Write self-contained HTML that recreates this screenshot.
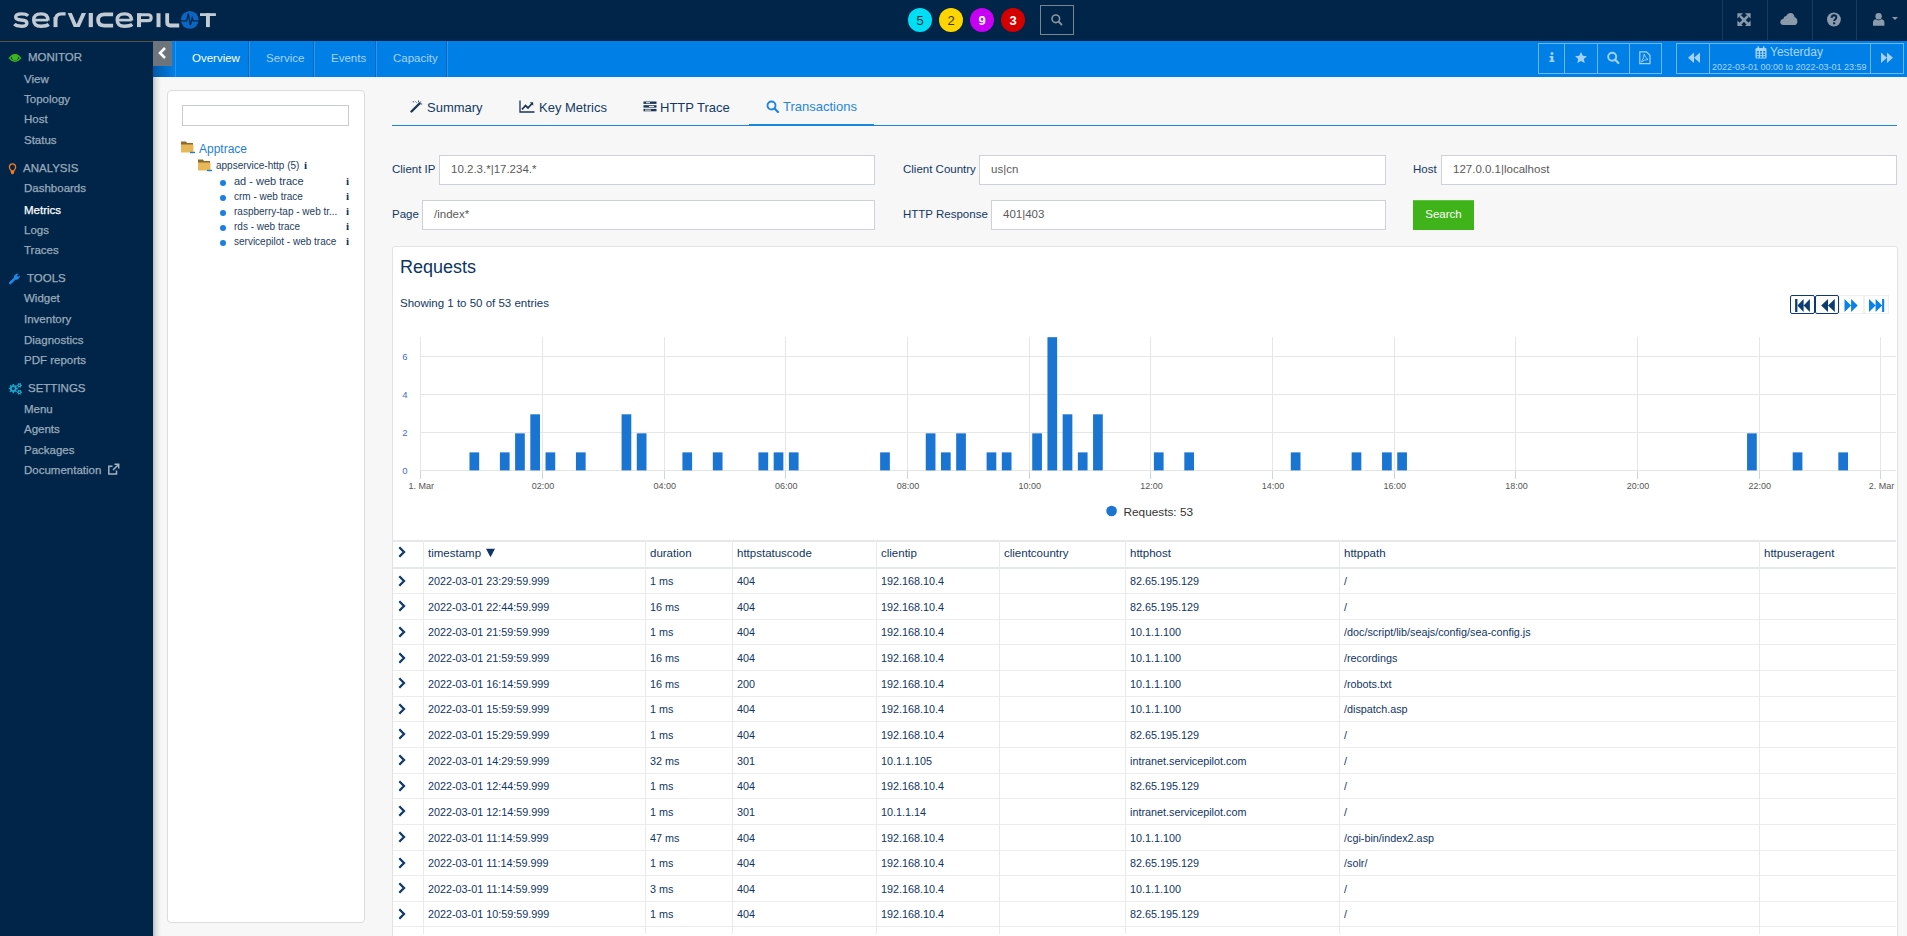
<!DOCTYPE html>
<html><head><meta charset="utf-8">
<style>
*{margin:0;padding:0;box-sizing:border-box}
html,body{width:1907px;height:936px;overflow:hidden;background:#f7f7f7;font-family:"Liberation Sans",sans-serif;font-size:11.5px;color:#17375e}
.a{position:absolute;white-space:nowrap;line-height:14px}
#hdr{position:absolute;left:0;top:0;width:1907px;height:41px;background:#002548}
#side{position:absolute;left:0;top:41px;width:153px;height:895px;background:#002548;border-top:1px solid #5a5040}
#nav{position:absolute;left:153px;top:41px;width:1754px;height:36px;background:#0080e6}
#content{position:absolute;left:153px;top:77px;width:1754px;height:859px;background:#f7f7f7}
.sh{color:#9aabbc;-webkit-text-stroke:0.25px #9aabbc}
.si{color:#9aabbc;left:24px;-webkit-text-stroke:0.25px #9aabbc}
.badge{position:absolute;top:8px;width:24px;height:24px;border-radius:12px;text-align:center;line-height:25px;font-size:13px}
.hsep{position:absolute;top:0;width:1px;height:40px;background:#1c3a59}
.ntab{position:absolute;top:40px;height:36px;line-height:36px;color:#a9d3f7;font-size:11.5px}
.nsepd{position:absolute;top:41px;width:1px;height:36px;background:#0068bc}
.nsepl{position:absolute;top:41px;width:1px;height:36px;background:#2a94ea}
.nbtn{position:absolute;top:43px;height:31px;border:1px solid #6cb6f2}
.tdot{position:absolute;left:220px;width:6px;height:6px;border-radius:3px;background:#1a7fe0}
.tl{left:234px;margin-top:1px;font-size:10px;color:#23405f}
.ti{left:346px;font-size:11px;font-weight:bold;font-family:"Liberation Serif",serif;color:#0d2f5a}
.tab{position:absolute;top:100px;font-size:13px;line-height:15px;color:#123a66;white-space:nowrap}
.lbl{color:#123866}
.inp{position:absolute;height:30px;border:1px solid #cdd2d8;background:#fff;padding-left:11px;line-height:26px;color:#5a5a5a;font-size:11.5px;white-space:nowrap}
.td{color:#0f3566;font-size:11.5px}
.tb{font-size:10.8px}
</style></head><body>
<div id="hdr"></div>
<div id="side"></div>
<div id="nav"></div>
<div id="content"></div>

<!-- logo -->
<svg class="a" style="left:0;top:0" width="230" height="41" viewBox="0 0 230 41">
<g fill="none" stroke="#c2cad3" stroke-width="3.4">
<path d="M28,15.8 Q26.3,13.9 21.2,13.9 Q15.7,13.9 15.7,17.1 Q15.7,19.8 21,20 Q26.9,20.2 26.9,23.2 Q26.9,26.2 21.3,26.2 Q16.2,26.2 14.3,24.2"/>
<path d="M48.1,20.6 Q48.1,13.9 41,13.9 Q33.7,13.9 33.7,20 Q33.7,26.2 41,26.2 Q46.6,26.2 48.8,24.4"/>
<path d="M131.6,20.6 Q131.6,13.9 124.5,13.9 Q117.2,13.9 117.2,20 Q117.2,26.2 124.5,26.2 Q130.1,26.2 132.3,24.4"/>
<path d="M55.5,20.5 Q55.5,13.9 61.5,13.9 H65.6"/>
<path d="M113.1,14.4 H104.5 Q98.1,14.4 98.1,20.05 Q98.1,25.7 104.5,25.7 H113.1" stroke-width="3.8"/>
<path d="M139,14.75 H148 Q151.2,14.75 151.2,17.7 Q151.2,20.65 148,20.65 H139" stroke-width="3.1"/>
<path d="M167.2,13.2 V22.6 Q167.2,25.5 170.2,25.5 H179.2" stroke-width="3.8"/>
</g>
<g fill="#c2cad3">
<rect x="33.7" y="18.75" width="14.4" height="2.7"/>
<rect x="117.2" y="18.75" width="14.4" height="2.7"/>
<rect x="53.5" y="17" width="4" height="10.1"/>
<polygon points="67.7,13 71.8,13 76.7,24.3 81.7,13 86,13 79.7,27.1 73.7,27.1"/>
<rect x="88.7" y="13" width="4.2" height="14.1"/>
<rect x="137" y="13.2" width="4" height="13.9"/>
<rect x="156.5" y="13.2" width="4" height="13.9"/>
<rect x="200" y="13.2" width="15.9" height="2.8"/>
<rect x="206" y="13.2" width="3.9" height="13.9"/>
</g>
<circle cx="189.8" cy="19.85" r="8.95" fill="#0a66c2"/>
<polyline points="180.8,20.8 186.7,20.8 188.3,13.6 190.4,25 192.2,18 193.2,20.8 198.7,20.8" fill="none" stroke="#002548" stroke-width="1.3" stroke-linejoin="miter"/>
</svg>

<!-- badges -->
<div class="badge" style="left:908px;background:#00def5;color:#333">5</div>
<div class="badge" style="left:939px;background:#ffd500;color:#333">2</div>
<div class="badge" style="left:970px;background:#c700f3;color:#fff;font-weight:bold">9</div>
<div class="badge" style="left:1001px;background:#d40000;color:#fff;font-weight:bold">3</div>
<div class="a" style="left:1040px;top:5px;width:34px;height:30px;border:1px solid #7a8590"></div>
<svg class="a" style="left:1050px;top:13px" width="14" height="14" viewBox="0 0 14 14"><circle cx="5.8" cy="5.8" r="3.8" fill="none" stroke="#8a949e" stroke-width="1.6"/><path d="M8.6,8.6 L11.5,11.5" stroke="#8a949e" stroke-width="1.8" stroke-linecap="round"/></svg>

<!-- right header -->
<div class="hsep" style="left:1722px"></div>
<div class="hsep" style="left:1767px"></div>
<div class="hsep" style="left:1812px"></div>
<div class="hsep" style="left:1856px"></div>
<svg class="a" style="left:1736px;top:12px" width="16" height="16" viewBox="0 0 16 16" fill="#8c9bab">
<path d="M4.2,4.2 L11.8,11.8 M11.8,4.2 L4.2,11.8" stroke="#8c9bab" stroke-width="2.6"/>
<path d="M1.4,1.2 H7 L1.4,6.6 Z M14.6,1.2 V6.6 L9,1.2 Z M1.4,14 V8.6 L7,14 Z M14.6,14 H9 L14.6,8.6 Z"/>
</svg>
<svg class="a" style="left:1780px;top:12px" width="18" height="15" viewBox="0 0 18 15" fill="#8c9bab">
<path d="M3.6,13 Q0.3,13 0.3,10 Q0.3,7.3 3.3,6.9 Q3.6,4.4 6.3,4.1 Q7.5,1 10.6,1 Q14.2,1.2 14.6,5.3 Q17.4,6 17.4,9.4 Q17.3,13 13.8,13 Z"/>
</svg>
<svg class="a" style="left:1826px;top:12px" width="16" height="16" viewBox="0 0 16 16">
<circle cx="7.9" cy="7.5" r="6.9" fill="#8c9bab"/>
<path d="M5.6,5.8 Q5.8,3.3 8,3.3 Q10.3,3.4 10.3,5.5 Q10.2,6.9 8.9,7.6 Q8.2,8 8.2,9.1" fill="none" stroke="#002548" stroke-width="1.9"/>
<rect x="7.1" y="10.3" width="2.1" height="2" fill="#002548"/>
</svg>
<svg class="a" style="left:1870px;top:12px" width="32" height="16" viewBox="0 0 32 16" fill="#8c9bab">
<circle cx="8.6" cy="4.3" r="3.2"/>
<path d="M3,13.8 V10.8 Q3,7.6 6,7.3 Q8.6,9 11.2,7.3 Q14.4,7.6 14.4,10.8 V13.8 Z"/>
<path d="M22,5 H28 L25,8 Z"/>
</svg>

<!-- nav -->
<div class="a" style="left:153px;top:41px;width:19px;height:25px;background:#6d747c"></div>
<svg class="a" style="left:156px;top:46px" width="13" height="14" viewBox="0 0 13 14"><path d="M9,2 L4,7 L9,12" fill="none" stroke="#fff" stroke-width="2.6"/></svg>
<div class="nsepl" style="left:175px"></div>
<div class="nsepd" style="left:248px"></div><div class="nsepl" style="left:249px"></div>
<div class="nsepd" style="left:313px"></div><div class="nsepl" style="left:314px"></div>
<div class="nsepd" style="left:375px"></div><div class="nsepl" style="left:376px"></div>
<div class="nsepd" style="left:446px"></div><div class="nsepl" style="left:447px"></div>
<div class="ntab" style="left:192px;color:#fff">Overview</div>
<div class="ntab" style="left:266px">Service</div>
<div class="ntab" style="left:331px">Events</div>
<div class="ntab" style="left:393px">Capacity</div>

<div class="nbtn" style="left:1538px;width:124px"></div>
<div class="nsepl" style="left:1564px;top:43px;height:31px;background:#6cb6f2"></div>
<div class="nsepl" style="left:1597px;top:43px;height:31px;background:#6cb6f2"></div>
<div class="nsepl" style="left:1629px;top:43px;height:31px;background:#6cb6f2"></div>
<div class="nbtn" style="left:1676px;width:228px"></div>
<div class="nsepl" style="left:1709px;top:43px;height:31px;background:#6cb6f2"></div>
<div class="nsepl" style="left:1870px;top:43px;height:31px;background:#6cb6f2"></div>

<!-- nav button icons -->
<svg class="a" style="left:1548px;top:52px" width="8" height="11" viewBox="0 0 8 11" fill="#a3d1f7">
<circle cx="4" cy="1.5" r="1.5"/><path d="M1.5,4 H5.3 V8.6 H6.5 V10 H1.5 V8.6 H2.7 V5.4 H1.5 Z"/>
</svg>
<svg class="a" style="left:1574px;top:51px" width="14" height="13" viewBox="0 0 14 13" fill="#a3d1f7">
<path d="M7,1 L8.8,4.8 L12.9,5.2 L9.8,8 L10.7,12.1 L7,9.9 L3.3,12.1 L4.2,8 L1.1,5.2 L5.2,4.8 Z"/>
</svg>
<svg class="a" style="left:1606px;top:51px" width="15" height="14" viewBox="0 0 15 14">
<circle cx="6.2" cy="5.8" r="4" fill="none" stroke="#a3d1f7" stroke-width="1.9"/><path d="M9,8.6 L12.4,12" stroke="#a3d1f7" stroke-width="2.2" stroke-linecap="round"/>
</svg>
<svg class="a" style="left:1638px;top:51px" width="14" height="14" viewBox="0 0 14 14">
<path d="M1.8,0.8 H8.5 L12,4.3 V12.7 H1.8 Z" fill="none" stroke="#a3d1f7" stroke-width="1.2"/>
<path d="M3.5,11 Q5.5,7.5 6.2,3 Q6.8,6.5 10,8.5 Q6,8.5 3.5,11" fill="none" stroke="#a3d1f7" stroke-width="0.9"/>
</svg>
<svg class="a" style="left:1687px;top:52px" width="14" height="12" viewBox="0 0 14 12" fill="#a3d1f7">
<path d="M7,0.5 V11 L1,5.75 Z M13,0.5 V11 L7,5.75 Z"/>
</svg>
<svg class="a" style="left:1880px;top:52px" width="14" height="12" viewBox="0 0 14 12" fill="#a3d1f7">
<path d="M1,0.5 V11 L7,5.75 Z M7,0.5 V11 L13,5.75 Z"/>
</svg>
<svg class="a" style="left:1755px;top:46px" width="12" height="13" viewBox="0 0 12 13" fill="#a9d4f7">
<rect x="0.5" y="2" width="11" height="10.5" rx="1"/>
<rect x="2.5" y="0.3" width="1.6" height="3"/><rect x="7.9" y="0.3" width="1.6" height="3"/>
<g fill="#0080e6"><rect x="1.8" y="5" width="2" height="1.6"/><rect x="5" y="5" width="2" height="1.6"/><rect x="8.2" y="5" width="2" height="1.6"/>
<rect x="1.8" y="7.6" width="2" height="1.6"/><rect x="5" y="7.6" width="2" height="1.6"/><rect x="8.2" y="7.6" width="2" height="1.6"/>
<rect x="1.8" y="10.2" width="2" height="1.4"/><rect x="5" y="10.2" width="2" height="1.4"/><rect x="8.2" y="10.2" width="2" height="1.4"/></g>
</svg>
<div class="a" style="left:1770px;top:45px;font-size:12px;color:#a9d4f7">Yesterday</div>
<div class="a" style="left:1712px;top:60px;font-size:9px;color:#a9d4f7">2022-03-01 00:00 to 2022-03-01 23:59</div>

<!-- sidebar -->
<svg class="a" style="left:0px;top:48px" width="26" height="20" viewBox="0 48 26 20">
<path d="M9.4,58 Q15,51.5 20.6,58 Q15,64.5 9.4,58 Z" fill="none" stroke="#3cb61c" stroke-width="1.4"/>
<circle cx="15" cy="57.2" r="3.1" fill="#3cb61c"/>
</svg>
<div class="a sh" style="left:28px;top:50px">MONITOR</div>
<div class="a si" style="top:72px">View</div>
<div class="a si" style="top:92px">Topology</div>
<div class="a si" style="top:112px">Host</div>
<div class="a si" style="top:133px">Status</div>
<svg class="a" style="left:0px;top:158px" width="22" height="20" viewBox="0 158 22 20">
<path d="M12.5,163.9 Q15.6,164 15.6,167.2 Q15.6,169.3 13.8,170.6 V171.2 H11.2 V170.6 Q9.4,169.3 9.4,167.2 Q9.4,164 12.5,163.9 Z" fill="none" stroke="#f0761c" stroke-width="1.3"/>
<path d="M10.9,170.4 H14.1 V173 Q13.5,174.2 12.5,174.2 Q11.5,174.2 10.9,173 Z" fill="#f57a1c"/>
</svg>
<div class="a sh" style="left:23px;top:161px">ANALYSIS</div>
<div class="a si" style="top:181px">Dashboards</div>
<div class="a si" style="top:203px;color:#fff;-webkit-text-stroke:0.25px #fff">Metrics</div>
<div class="a si" style="top:223px">Logs</div>
<div class="a si" style="top:243px">Traces</div>
<svg class="a" style="left:0px;top:268px" width="30" height="20" viewBox="0 268 30 20">
<path d="M10.2,283.2 L15.2,278.2" stroke="#1e88e5" stroke-width="2.6" stroke-linecap="round"/>
<path d="M14.2,279.3 Q13.2,275.8 15.6,274.2 Q17.2,273.3 18.7,273.7 L17,275.6 L18.1,277 L19.9,275.2 Q20.3,277.5 18.6,278.8 Q16.8,280.3 14.2,279.3 Z" fill="#1e88e5"/>
</svg>
<div class="a sh" style="left:27px;top:271px">TOOLS</div>
<div class="a si" style="top:291px">Widget</div>
<div class="a si" style="top:312px">Inventory</div>
<div class="a si" style="top:333px">Diagnostics</div>
<div class="a si" style="top:353px">PDF reports</div>
<svg class="a" style="left:0px;top:378px" width="30" height="20" viewBox="0 378 30 20">
<path d="M17.83,387.78 L17.83,389.42 L16.72,389.34 L16.24,390.50 L17.08,391.22 L15.92,392.38 L15.20,391.54 L14.04,392.02 L14.12,393.13 L12.48,393.13 L12.56,392.02 L11.40,391.54 L10.68,392.38 L9.52,391.22 L10.36,390.50 L9.88,389.34 L8.77,389.42 L8.77,387.78 L9.88,387.86 L10.36,386.70 L9.52,385.98 L10.68,384.82 L11.40,385.66 L12.56,385.18 L12.48,384.07 L14.12,384.07 L14.04,385.18 L15.20,385.66 L15.92,384.82 L17.08,385.98 L16.24,386.70 L16.72,387.86 Z M13.3,387.1 A1.5,1.5 0 1,0 13.3,390.1 A1.5,1.5 0 1,0 13.3,387.1 Z" fill="#1aa3c8" fill-rule="evenodd"/>
<path d="M21.96,384.93 L21.96,385.87 L21.19,386.04 L20.85,386.63 L21.08,387.38 L20.28,387.85 L19.74,387.27 L19.06,387.27 L18.52,387.85 L17.72,387.38 L17.95,386.63 L17.61,386.04 L16.84,385.87 L16.84,384.93 L17.61,384.76 L17.95,384.17 L17.72,383.42 L18.52,382.95 L19.06,383.53 L19.74,383.53 L20.28,382.95 L21.08,383.42 L20.85,384.17 L21.19,384.76 Z M19.4,384.7 A0.7,0.7 0 1,0 19.4,386.1 A0.7,0.7 0 1,0 19.4,384.7 Z" fill="#1aa3c8" fill-rule="evenodd"/>
<path d="M21.96,391.73 L21.96,392.67 L21.19,392.84 L20.85,393.43 L21.08,394.18 L20.28,394.65 L19.74,394.07 L19.06,394.07 L18.52,394.65 L17.72,394.18 L17.95,393.43 L17.61,392.84 L16.84,392.67 L16.84,391.73 L17.61,391.56 L17.95,390.97 L17.72,390.22 L18.52,389.75 L19.06,390.33 L19.74,390.33 L20.28,389.75 L21.08,390.22 L20.85,390.97 L21.19,391.56 Z M19.4,391.5 A0.7,0.7 0 1,0 19.4,392.9 A0.7,0.7 0 1,0 19.4,391.5 Z" fill="#1aa3c8" fill-rule="evenodd"/>
</svg>
<div class="a sh" style="left:28px;top:381px">SETTINGS</div>
<div class="a si" style="top:402px">Menu</div>
<div class="a si" style="top:422px">Agents</div>
<div class="a si" style="top:443px">Packages</div>
<div class="a si" style="top:463px">Documentation</div>
<svg class="a" style="left:107px;top:463px" width="13" height="13" viewBox="0 0 13 13" fill="none" stroke="#a3b2c1" stroke-width="1.5">
<path d="M9.5,7.5 V11 H1.8 V3.3 H5.5"/><path d="M6,7 L11.5,1.5 M7.5,1.3 H11.7 V5.5"/>
</svg>

<!-- content shadow -->
<div class="a" style="left:153px;top:77px;width:8px;height:859px;background:linear-gradient(to right,#bdbdbd,#dedede 35%,#f7f7f7)"></div>
<div class="a" style="left:153px;top:66px;width:22px;height:11px;background:linear-gradient(to right,#0058a8,#0080e6)"></div>

<!-- tree panel -->
<div class="a" style="left:167px;top:90px;width:198px;height:833px;background:#fff;border:1px solid #dcdcdc;border-radius:4px"></div>
<div class="a" style="left:182px;top:105px;width:167px;height:21px;border:1px solid #c6ccd3;background:#fff"></div>
<svg class="a" style="left:180px;top:140px" width="16" height="14" viewBox="0 0 16 14">
<path d="M1,1.5 H6 L7,3 H13 V11.5 H1 Z" fill="#8b6a2e"/>
<path d="M1,4.5 H13.5 V12.5 H1 Z" fill="#e8b858"/>
<rect x="10" y="11.8" width="5" height="1.4" fill="#1c7fd8"/>
</svg>
<div class="a" style="left:199px;top:142px;font-size:12px;color:#1f7fd6">Apptrace</div>
<svg class="a" style="left:197px;top:158px" width="16" height="14" viewBox="0 0 16 14">
<path d="M1,1.5 H6 L7,3 H13 V11.5 H1 Z" fill="#8b6a2e"/>
<path d="M1,4.5 H13.5 V12.5 H1 Z" fill="#e8b858"/>
<rect x="10" y="11.8" width="5" height="1.4" fill="#1c7fd8"/>
</svg>
<div class="a" style="left:216px;top:159px;font-size:10px;color:#23405f">appservice-http (5)</div>
<div class="a" style="left:304px;top:158px;font-size:11px;font-weight:bold;font-family:'Liberation Serif',serif;color:#0d2f5a">i</div>
<div class="tdot" style="top:180px"></div><div class="a tl" style="top:173px;font-size:11px">ad - web trace</div><div class="a ti" style="top:174px">i</div>
<div class="tdot" style="top:195px"></div><div class="a tl" style="top:189px">crm - web trace</div><div class="a ti" style="top:189px">i</div>
<div class="tdot" style="top:210px"></div><div class="a tl" style="top:204px">raspberry-tap - web tr...</div><div class="a ti" style="top:204px">i</div>
<div class="tdot" style="top:225px"></div><div class="a tl" style="top:219px">rds - web trace</div><div class="a ti" style="top:219px">i</div>
<div class="tdot" style="top:240px"></div><div class="a tl" style="top:234px">servicepilot - web trace</div><div class="a ti" style="top:234px">i</div>

<!-- tabs -->
<div class="a" style="left:392px;top:125px;width:1505px;height:1px;background:#1a86e0"></div>
<div class="a" style="left:749px;top:124px;width:125px;height:2px;background:#1a86e0"></div>
<svg class="a" style="left:410px;top:100px" width="13" height="13" viewBox="0 0 13 13">
<path d="M1.5,11.5 L9.5,3.5" stroke="#1b3556" stroke-width="2.4" stroke-linecap="round"/>
<g stroke="#1b3556" stroke-width="0.9"><path d="M8.5,0.5 V2.2 M10.8,1.5 L10,2.8 M12.2,4 H10.6 M5.5,1.5 L6.5,2.6 M3.3,1.2 V2.4"/></g>
</svg>
<div class="tab" style="left:427px">Summary</div>
<svg class="a" style="left:519px;top:100px" width="16" height="13" viewBox="0 0 16 13">
<path d="M1,0.5 V12 H15.5" fill="none" stroke="#1b3556" stroke-width="1.3"/>
<path d="M3,9.5 L6.5,5.5 L9,8 L13,3.5" fill="none" stroke="#1b3556" stroke-width="1.8"/>
<path d="M10.8,2.3 H14.2 V5.7 Z" fill="#1b3556"/>
</svg>
<div class="tab" style="left:539px">Key Metrics</div>
<svg class="a" style="left:643px;top:101px" width="14" height="11" viewBox="0 0 14 11" fill="#1b3556">
<rect x="0.5" y="0.5" width="13" height="2.4"/><rect x="0.5" y="4.2" width="13" height="2.4"/><rect x="0.5" y="7.9" width="13" height="2.4"/>
<g fill="#f7f7f7"><rect x="3" y="1.2" width="4" height="1"/><rect x="6" y="4.9" width="5" height="1"/><rect x="2" y="8.6" width="6" height="1"/></g>
</svg>
<div class="tab" style="left:660px">HTTP Trace</div>
<svg class="a" style="left:766px;top:100px" width="14" height="13" viewBox="0 0 14 13">
<circle cx="5.5" cy="5.5" r="4" fill="none" stroke="#1f86dc" stroke-width="1.9"/><path d="M8.5,8.5 L12,12" stroke="#1f86dc" stroke-width="2.2" stroke-linecap="round"/>
</svg>
<div class="tab" style="left:783px;top:99px;color:#1f86dc">Transactions</div>

<!-- filter form -->
<div class="a lbl" style="left:392px;top:162px">Client IP</div>
<div class="inp" style="left:439px;top:155px;width:436px">10.2.3.*|17.234.*</div>
<div class="a lbl" style="left:903px;top:162px">Client Country</div>
<div class="inp" style="left:979px;top:155px;width:407px">us|cn</div>
<div class="a lbl" style="left:1413px;top:162px">Host</div>
<div class="inp" style="left:1441px;top:155px;width:456px">127.0.0.1|localhost</div>
<div class="a lbl" style="left:392px;top:207px">Page</div>
<div class="inp" style="left:422px;top:200px;width:453px">/index*</div>
<div class="a lbl" style="left:903px;top:207px">HTTP Response</div>
<div class="inp" style="left:991px;top:200px;width:395px">401|403</div>
<div class="a" style="left:1413px;top:200px;width:61px;height:30px;background:#40b31a;color:#fff;text-align:center;line-height:29px;font-size:11.5px;box-shadow:inset 0 2px 0 -1px rgba(255,255,255,0.18)">Search</div>

<!-- requests panel -->
<div class="a" style="left:392px;top:246px;width:1506px;height:700px;background:#fff;border:1px solid #e2e2e2;border-radius:3px"></div>
<div class="a" style="left:400px;top:256px;font-size:18px;line-height:22px;color:#0a3566">Requests</div>
<div class="a" style="left:400px;top:296px;color:#113868">Showing 1 to 50 of 53 entries</div>

<!-- pagination -->
<div class="a" style="left:1790px;top:295px;width:25px;height:19px;border:1px solid #0d3a6e;border-radius:2px;background:#fff"></div>
<div class="a" style="left:1815px;top:295px;width:24px;height:19px;border:1px solid #0d3a6e;border-radius:2px;background:#fff"></div>
<div class="a" style="left:1839px;top:295px;width:25px;height:19px;border:1px solid #f0f0f0;background:#fff"></div>
<div class="a" style="left:1864px;top:295px;width:25px;height:19px;border:1px solid #f0f0f0;background:#fff"></div>
<svg class="a" style="left:1790px;top:295px" width="100" height="19" viewBox="0 0 100 19">
<g fill="#0b3d73"><rect x="5.1" y="4" width="2.3" height="13"/><path d="M7.4,10.5 L13.6,4 V17 Z M13.6,10.5 L19.9,4 V17 Z"/>
<path d="M31.2,10.5 L38,4 V17 Z M38,10.5 L44.8,4 V17 Z"/></g>
<g fill="#0a80ea"><path d="M54.5,4 L61.1,10.5 L54.5,17 Z M61.1,4 L67.7,10.5 L61.1,17 Z"/>
<path d="M79,4 L85.6,10.5 L79,17 Z M85.6,4 L92.1,10.5 L85.6,17 Z"/><rect x="92.1" y="4" width="2.1" height="13"/></g>
</svg>
<svg class="a" style="left:392px;top:330px" width="1506" height="200" viewBox="392 330 1506 200">
<path d="M420.3,432.5 H1896" stroke="#e6e6e6" stroke-width="1"/>
<path d="M420.3,394.5 H1896" stroke="#e6e6e6" stroke-width="1"/>
<path d="M420.3,356.5 H1896" stroke="#e6e6e6" stroke-width="1"/>
<path d="M420.5,337 V470" stroke="#e6e6e6" stroke-width="1"/>
<path d="M420.5,470 V479" stroke="#ccd6eb" stroke-width="1"/>
<path d="M542.5,337 V470" stroke="#e6e6e6" stroke-width="1"/>
<path d="M542.5,470 V479" stroke="#ccd6eb" stroke-width="1"/>
<path d="M664.5,337 V470" stroke="#e6e6e6" stroke-width="1"/>
<path d="M664.5,470 V479" stroke="#ccd6eb" stroke-width="1"/>
<path d="M785.5,337 V470" stroke="#e6e6e6" stroke-width="1"/>
<path d="M785.5,470 V479" stroke="#ccd6eb" stroke-width="1"/>
<path d="M907.5,337 V470" stroke="#e6e6e6" stroke-width="1"/>
<path d="M907.5,470 V479" stroke="#ccd6eb" stroke-width="1"/>
<path d="M1029.5,337 V470" stroke="#e6e6e6" stroke-width="1"/>
<path d="M1029.5,470 V479" stroke="#ccd6eb" stroke-width="1"/>
<path d="M1150.5,337 V470" stroke="#e6e6e6" stroke-width="1"/>
<path d="M1150.5,470 V479" stroke="#ccd6eb" stroke-width="1"/>
<path d="M1272.5,337 V470" stroke="#e6e6e6" stroke-width="1"/>
<path d="M1272.5,470 V479" stroke="#ccd6eb" stroke-width="1"/>
<path d="M1394.5,337 V470" stroke="#e6e6e6" stroke-width="1"/>
<path d="M1394.5,470 V479" stroke="#ccd6eb" stroke-width="1"/>
<path d="M1515.5,337 V470" stroke="#e6e6e6" stroke-width="1"/>
<path d="M1515.5,470 V479" stroke="#ccd6eb" stroke-width="1"/>
<path d="M1637.5,337 V470" stroke="#e6e6e6" stroke-width="1"/>
<path d="M1637.5,470 V479" stroke="#ccd6eb" stroke-width="1"/>
<path d="M1759.5,337 V470" stroke="#e6e6e6" stroke-width="1"/>
<path d="M1759.5,470 V479" stroke="#ccd6eb" stroke-width="1"/>
<path d="M1880.5,337 V470" stroke="#e6e6e6" stroke-width="1"/>
<path d="M1880.5,470 V479" stroke="#ccd6eb" stroke-width="1"/>
<path d="M420.3,470.5 H1896" stroke="#e6e6e6" stroke-width="1"/>
<rect x="469.48" y="452.37" width="9.7" height="18.03" fill="#1a74d2"/>
<rect x="499.90" y="452.37" width="9.7" height="18.03" fill="#1a74d2"/>
<rect x="515.11" y="433.34" width="9.7" height="37.06" fill="#1a74d2"/>
<rect x="530.32" y="414.31" width="9.7" height="56.09" fill="#1a74d2"/>
<rect x="545.53" y="452.37" width="9.7" height="18.03" fill="#1a74d2"/>
<rect x="575.95" y="452.37" width="9.7" height="18.03" fill="#1a74d2"/>
<rect x="621.58" y="414.31" width="9.7" height="56.09" fill="#1a74d2"/>
<rect x="636.79" y="433.34" width="9.7" height="37.06" fill="#1a74d2"/>
<rect x="682.41" y="452.37" width="9.7" height="18.03" fill="#1a74d2"/>
<rect x="712.83" y="452.37" width="9.7" height="18.03" fill="#1a74d2"/>
<rect x="758.46" y="452.37" width="9.7" height="18.03" fill="#1a74d2"/>
<rect x="773.67" y="452.37" width="9.7" height="18.03" fill="#1a74d2"/>
<rect x="788.88" y="452.37" width="9.7" height="18.03" fill="#1a74d2"/>
<rect x="880.14" y="452.37" width="9.7" height="18.03" fill="#1a74d2"/>
<rect x="925.76" y="433.34" width="9.7" height="37.06" fill="#1a74d2"/>
<rect x="940.97" y="452.37" width="9.7" height="18.03" fill="#1a74d2"/>
<rect x="956.18" y="433.34" width="9.7" height="37.06" fill="#1a74d2"/>
<rect x="986.60" y="452.37" width="9.7" height="18.03" fill="#1a74d2"/>
<rect x="1001.81" y="452.37" width="9.7" height="18.03" fill="#1a74d2"/>
<rect x="1032.23" y="433.34" width="9.7" height="37.06" fill="#1a74d2"/>
<rect x="1047.44" y="337.19" width="9.7" height="133.21" fill="#1a74d2"/>
<rect x="1062.65" y="414.31" width="9.7" height="56.09" fill="#1a74d2"/>
<rect x="1077.86" y="452.37" width="9.7" height="18.03" fill="#1a74d2"/>
<rect x="1093.07" y="414.31" width="9.7" height="56.09" fill="#1a74d2"/>
<rect x="1153.90" y="452.37" width="9.7" height="18.03" fill="#1a74d2"/>
<rect x="1184.32" y="452.37" width="9.7" height="18.03" fill="#1a74d2"/>
<rect x="1290.79" y="452.37" width="9.7" height="18.03" fill="#1a74d2"/>
<rect x="1351.63" y="452.37" width="9.7" height="18.03" fill="#1a74d2"/>
<rect x="1382.05" y="452.37" width="9.7" height="18.03" fill="#1a74d2"/>
<rect x="1397.25" y="452.37" width="9.7" height="18.03" fill="#1a74d2"/>
<rect x="1747.07" y="433.34" width="9.7" height="37.06" fill="#1a74d2"/>
<rect x="1792.70" y="452.37" width="9.7" height="18.03" fill="#1a74d2"/>
<rect x="1838.33" y="452.37" width="9.7" height="18.03" fill="#1a74d2"/>
<text x="407.5" y="473.7" text-anchor="end" font-size="9.5" fill="#3f6ec8" font-family="Liberation Sans">0</text>
<text x="407.5" y="435.6" text-anchor="end" font-size="9.5" fill="#3f6ec8" font-family="Liberation Sans">2</text>
<text x="407.5" y="397.6" text-anchor="end" font-size="9.5" fill="#3f6ec8" font-family="Liberation Sans">4</text>
<text x="407.5" y="359.5" text-anchor="end" font-size="9.5" fill="#3f6ec8" font-family="Liberation Sans">6</text>
<text x="421.3" y="489" text-anchor="middle" font-size="9" fill="#555" font-family="Liberation Sans">1. Mar</text>
<text x="543.0" y="489" text-anchor="middle" font-size="9" fill="#555" font-family="Liberation Sans">02:00</text>
<text x="664.7" y="489" text-anchor="middle" font-size="9" fill="#555" font-family="Liberation Sans">04:00</text>
<text x="786.3" y="489" text-anchor="middle" font-size="9" fill="#555" font-family="Liberation Sans">06:00</text>
<text x="908.0" y="489" text-anchor="middle" font-size="9" fill="#555" font-family="Liberation Sans">08:00</text>
<text x="1029.7" y="489" text-anchor="middle" font-size="9" fill="#555" font-family="Liberation Sans">10:00</text>
<text x="1151.4" y="489" text-anchor="middle" font-size="9" fill="#555" font-family="Liberation Sans">12:00</text>
<text x="1273.0" y="489" text-anchor="middle" font-size="9" fill="#555" font-family="Liberation Sans">14:00</text>
<text x="1394.7" y="489" text-anchor="middle" font-size="9" fill="#555" font-family="Liberation Sans">16:00</text>
<text x="1516.4" y="489" text-anchor="middle" font-size="9" fill="#555" font-family="Liberation Sans">18:00</text>
<text x="1638.0" y="489" text-anchor="middle" font-size="9" fill="#555" font-family="Liberation Sans">20:00</text>
<text x="1759.7" y="489" text-anchor="middle" font-size="9" fill="#555" font-family="Liberation Sans">22:00</text>
<text x="1881.4" y="489" text-anchor="middle" font-size="9" fill="#555" font-family="Liberation Sans">2. Mar</text>
<circle cx="1111.6" cy="511" r="5.3" fill="#1a74d2"/>
<text x="1123.5" y="515.5" font-size="11.8" fill="#333" font-family="Liberation Sans">Requests: 53</text>
</svg>

<div class="a" style="left:393px;top:540px;width:1503px;height:2px;background:#e4e7eb"></div>
<div class="a" style="left:393px;top:567px;width:1503px;height:2px;background:#e4e7eb"></div>
<div class="a" style="left:393px;top:593px;width:1503px;height:1px;background:#ececec"></div>
<div class="a" style="left:393px;top:619px;width:1503px;height:1px;background:#ececec"></div>
<div class="a" style="left:393px;top:644px;width:1503px;height:1px;background:#ececec"></div>
<div class="a" style="left:393px;top:670px;width:1503px;height:1px;background:#ececec"></div>
<div class="a" style="left:393px;top:696px;width:1503px;height:1px;background:#ececec"></div>
<div class="a" style="left:393px;top:721px;width:1503px;height:1px;background:#ececec"></div>
<div class="a" style="left:393px;top:747px;width:1503px;height:1px;background:#ececec"></div>
<div class="a" style="left:393px;top:773px;width:1503px;height:1px;background:#ececec"></div>
<div class="a" style="left:393px;top:798px;width:1503px;height:1px;background:#ececec"></div>
<div class="a" style="left:393px;top:824px;width:1503px;height:1px;background:#ececec"></div>
<div class="a" style="left:393px;top:850px;width:1503px;height:1px;background:#ececec"></div>
<div class="a" style="left:393px;top:875px;width:1503px;height:1px;background:#ececec"></div>
<div class="a" style="left:393px;top:901px;width:1503px;height:1px;background:#ececec"></div>
<div class="a" style="left:393px;top:926px;width:1503px;height:1px;background:#ececec"></div>
<div class="a" style="left:393px;top:952px;width:1503px;height:1px;background:#ececec"></div>
<div class="a" style="left:393px;top:978px;width:1503px;height:1px;background:#ececec"></div>
<div class="a" style="left:423px;top:540px;width:1px;height:394px;background:#eaeaea"></div>
<div class="a" style="left:645px;top:540px;width:1px;height:394px;background:#eaeaea"></div>
<div class="a" style="left:732px;top:540px;width:1px;height:394px;background:#eaeaea"></div>
<div class="a" style="left:876px;top:540px;width:1px;height:394px;background:#eaeaea"></div>
<div class="a" style="left:999px;top:540px;width:1px;height:394px;background:#eaeaea"></div>
<div class="a" style="left:1125px;top:540px;width:1px;height:394px;background:#eaeaea"></div>
<div class="a" style="left:1339px;top:540px;width:1px;height:394px;background:#eaeaea"></div>
<div class="a" style="left:1759px;top:540px;width:1px;height:394px;background:#eaeaea"></div>
<svg class="a" style="left:397px;top:546px" width="10" height="12" viewBox="0 0 10 12"><path d="M2.3,1.3 L7,6 L2.3,10.7" fill="none" stroke="#0d3a6e" stroke-width="2.3"/></svg>
<div class="a td" style="left:428px;top:545.7px">timestamp</div>
<div class="a td" style="left:650px;top:545.7px">duration</div>
<div class="a td" style="left:737px;top:545.7px">httpstatuscode</div>
<div class="a td" style="left:881px;top:545.7px">clientip</div>
<div class="a td" style="left:1004px;top:545.7px">clientcountry</div>
<div class="a td" style="left:1130px;top:545.7px">httphost</div>
<div class="a td" style="left:1344px;top:545.7px">httppath</div>
<div class="a td" style="left:1764px;top:545.7px">httpuseragent</div>
<svg class="a" style="left:485px;top:548px" width="11" height="10" viewBox="0 0 11 10"><path d="M1,0.8 H10 L5.5,9.2 Z" fill="#0f3566"/></svg>
<svg class="a" style="left:397px;top:575px" width="10" height="12" viewBox="0 0 10 12"><path d="M2.3,1.3 L7,6 L2.3,10.7" fill="none" stroke="#0d3a6e" stroke-width="2.3"/></svg>
<div class="a td tb" style="left:428px;top:574.0px">2022-03-01 23:29:59.999</div>
<div class="a td tb" style="left:650px;top:574.0px">1 ms</div>
<div class="a td tb" style="left:737px;top:574.0px">404</div>
<div class="a td tb" style="left:881px;top:574.0px">192.168.10.4</div>
<div class="a td tb" style="left:1130px;top:574.0px">82.65.195.129</div>
<div class="a td tb" style="left:1344px;top:574.0px">/</div>
<svg class="a" style="left:397px;top:600px" width="10" height="12" viewBox="0 0 10 12"><path d="M2.3,1.3 L7,6 L2.3,10.7" fill="none" stroke="#0d3a6e" stroke-width="2.3"/></svg>
<div class="a td tb" style="left:428px;top:599.6px">2022-03-01 22:44:59.999</div>
<div class="a td tb" style="left:650px;top:599.6px">16 ms</div>
<div class="a td tb" style="left:737px;top:599.6px">404</div>
<div class="a td tb" style="left:881px;top:599.6px">192.168.10.4</div>
<div class="a td tb" style="left:1130px;top:599.6px">82.65.195.129</div>
<div class="a td tb" style="left:1344px;top:599.6px">/</div>
<svg class="a" style="left:397px;top:626px" width="10" height="12" viewBox="0 0 10 12"><path d="M2.3,1.3 L7,6 L2.3,10.7" fill="none" stroke="#0d3a6e" stroke-width="2.3"/></svg>
<div class="a td tb" style="left:428px;top:625.3px">2022-03-01 21:59:59.999</div>
<div class="a td tb" style="left:650px;top:625.3px">1 ms</div>
<div class="a td tb" style="left:737px;top:625.3px">404</div>
<div class="a td tb" style="left:881px;top:625.3px">192.168.10.4</div>
<div class="a td tb" style="left:1130px;top:625.3px">10.1.1.100</div>
<div class="a td tb" style="left:1344px;top:625.3px">/doc/script/lib/seajs/config/sea-config.js</div>
<svg class="a" style="left:397px;top:652px" width="10" height="12" viewBox="0 0 10 12"><path d="M2.3,1.3 L7,6 L2.3,10.7" fill="none" stroke="#0d3a6e" stroke-width="2.3"/></svg>
<div class="a td tb" style="left:428px;top:650.9px">2022-03-01 21:59:59.999</div>
<div class="a td tb" style="left:650px;top:650.9px">16 ms</div>
<div class="a td tb" style="left:737px;top:650.9px">404</div>
<div class="a td tb" style="left:881px;top:650.9px">192.168.10.4</div>
<div class="a td tb" style="left:1130px;top:650.9px">10.1.1.100</div>
<div class="a td tb" style="left:1344px;top:650.9px">/recordings</div>
<svg class="a" style="left:397px;top:677px" width="10" height="12" viewBox="0 0 10 12"><path d="M2.3,1.3 L7,6 L2.3,10.7" fill="none" stroke="#0d3a6e" stroke-width="2.3"/></svg>
<div class="a td tb" style="left:428px;top:676.6px">2022-03-01 16:14:59.999</div>
<div class="a td tb" style="left:650px;top:676.6px">16 ms</div>
<div class="a td tb" style="left:737px;top:676.6px">200</div>
<div class="a td tb" style="left:881px;top:676.6px">192.168.10.4</div>
<div class="a td tb" style="left:1130px;top:676.6px">10.1.1.100</div>
<div class="a td tb" style="left:1344px;top:676.6px">/robots.txt</div>
<svg class="a" style="left:397px;top:703px" width="10" height="12" viewBox="0 0 10 12"><path d="M2.3,1.3 L7,6 L2.3,10.7" fill="none" stroke="#0d3a6e" stroke-width="2.3"/></svg>
<div class="a td tb" style="left:428px;top:702.2px">2022-03-01 15:59:59.999</div>
<div class="a td tb" style="left:650px;top:702.2px">1 ms</div>
<div class="a td tb" style="left:737px;top:702.2px">404</div>
<div class="a td tb" style="left:881px;top:702.2px">192.168.10.4</div>
<div class="a td tb" style="left:1130px;top:702.2px">10.1.1.100</div>
<div class="a td tb" style="left:1344px;top:702.2px">/dispatch.asp</div>
<svg class="a" style="left:397px;top:728px" width="10" height="12" viewBox="0 0 10 12"><path d="M2.3,1.3 L7,6 L2.3,10.7" fill="none" stroke="#0d3a6e" stroke-width="2.3"/></svg>
<div class="a td tb" style="left:428px;top:727.9px">2022-03-01 15:29:59.999</div>
<div class="a td tb" style="left:650px;top:727.9px">1 ms</div>
<div class="a td tb" style="left:737px;top:727.9px">404</div>
<div class="a td tb" style="left:881px;top:727.9px">192.168.10.4</div>
<div class="a td tb" style="left:1130px;top:727.9px">82.65.195.129</div>
<div class="a td tb" style="left:1344px;top:727.9px">/</div>
<svg class="a" style="left:397px;top:754px" width="10" height="12" viewBox="0 0 10 12"><path d="M2.3,1.3 L7,6 L2.3,10.7" fill="none" stroke="#0d3a6e" stroke-width="2.3"/></svg>
<div class="a td tb" style="left:428px;top:753.5px">2022-03-01 14:29:59.999</div>
<div class="a td tb" style="left:650px;top:753.5px">32 ms</div>
<div class="a td tb" style="left:737px;top:753.5px">301</div>
<div class="a td tb" style="left:881px;top:753.5px">10.1.1.105</div>
<div class="a td tb" style="left:1130px;top:753.5px">intranet.servicepilot.com</div>
<div class="a td tb" style="left:1344px;top:753.5px">/</div>
<svg class="a" style="left:397px;top:780px" width="10" height="12" viewBox="0 0 10 12"><path d="M2.3,1.3 L7,6 L2.3,10.7" fill="none" stroke="#0d3a6e" stroke-width="2.3"/></svg>
<div class="a td tb" style="left:428px;top:779.2px">2022-03-01 12:44:59.999</div>
<div class="a td tb" style="left:650px;top:779.2px">1 ms</div>
<div class="a td tb" style="left:737px;top:779.2px">404</div>
<div class="a td tb" style="left:881px;top:779.2px">192.168.10.4</div>
<div class="a td tb" style="left:1130px;top:779.2px">82.65.195.129</div>
<div class="a td tb" style="left:1344px;top:779.2px">/</div>
<svg class="a" style="left:397px;top:805px" width="10" height="12" viewBox="0 0 10 12"><path d="M2.3,1.3 L7,6 L2.3,10.7" fill="none" stroke="#0d3a6e" stroke-width="2.3"/></svg>
<div class="a td tb" style="left:428px;top:804.9px">2022-03-01 12:14:59.999</div>
<div class="a td tb" style="left:650px;top:804.9px">1 ms</div>
<div class="a td tb" style="left:737px;top:804.9px">301</div>
<div class="a td tb" style="left:881px;top:804.9px">10.1.1.14</div>
<div class="a td tb" style="left:1130px;top:804.9px">intranet.servicepilot.com</div>
<div class="a td tb" style="left:1344px;top:804.9px">/</div>
<svg class="a" style="left:397px;top:831px" width="10" height="12" viewBox="0 0 10 12"><path d="M2.3,1.3 L7,6 L2.3,10.7" fill="none" stroke="#0d3a6e" stroke-width="2.3"/></svg>
<div class="a td tb" style="left:428px;top:830.5px">2022-03-01 11:14:59.999</div>
<div class="a td tb" style="left:650px;top:830.5px">47 ms</div>
<div class="a td tb" style="left:737px;top:830.5px">404</div>
<div class="a td tb" style="left:881px;top:830.5px">192.168.10.4</div>
<div class="a td tb" style="left:1130px;top:830.5px">10.1.1.100</div>
<div class="a td tb" style="left:1344px;top:830.5px">/cgi-bin/index2.asp</div>
<svg class="a" style="left:397px;top:857px" width="10" height="12" viewBox="0 0 10 12"><path d="M2.3,1.3 L7,6 L2.3,10.7" fill="none" stroke="#0d3a6e" stroke-width="2.3"/></svg>
<div class="a td tb" style="left:428px;top:856.1px">2022-03-01 11:14:59.999</div>
<div class="a td tb" style="left:650px;top:856.1px">1 ms</div>
<div class="a td tb" style="left:737px;top:856.1px">404</div>
<div class="a td tb" style="left:881px;top:856.1px">192.168.10.4</div>
<div class="a td tb" style="left:1130px;top:856.1px">82.65.195.129</div>
<div class="a td tb" style="left:1344px;top:856.1px">/solr/</div>
<svg class="a" style="left:397px;top:882px" width="10" height="12" viewBox="0 0 10 12"><path d="M2.3,1.3 L7,6 L2.3,10.7" fill="none" stroke="#0d3a6e" stroke-width="2.3"/></svg>
<div class="a td tb" style="left:428px;top:881.8px">2022-03-01 11:14:59.999</div>
<div class="a td tb" style="left:650px;top:881.8px">3 ms</div>
<div class="a td tb" style="left:737px;top:881.8px">404</div>
<div class="a td tb" style="left:881px;top:881.8px">192.168.10.4</div>
<div class="a td tb" style="left:1130px;top:881.8px">10.1.1.100</div>
<div class="a td tb" style="left:1344px;top:881.8px">/</div>
<svg class="a" style="left:397px;top:908px" width="10" height="12" viewBox="0 0 10 12"><path d="M2.3,1.3 L7,6 L2.3,10.7" fill="none" stroke="#0d3a6e" stroke-width="2.3"/></svg>
<div class="a td tb" style="left:428px;top:907.4px">2022-03-01 10:59:59.999</div>
<div class="a td tb" style="left:650px;top:907.4px">1 ms</div>
<div class="a td tb" style="left:737px;top:907.4px">404</div>
<div class="a td tb" style="left:881px;top:907.4px">192.168.10.4</div>
<div class="a td tb" style="left:1130px;top:907.4px">82.65.195.129</div>
<div class="a td tb" style="left:1344px;top:907.4px">/</div>
</body></html>
